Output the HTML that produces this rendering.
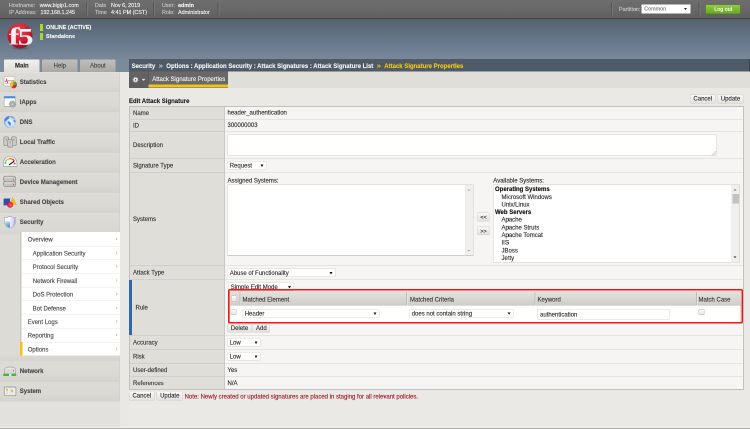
<!DOCTYPE html><html><head><meta charset="utf-8"><style>html,body{width:750px!important;height:429px!important;overflow:hidden}#w{position:absolute;left:0;top:0;width:1500px;height:858px;transform:scale(.5);transform-origin:0 0;will-change:transform;overflow:hidden}
*{box-sizing:border-box;margin:0;padding:0}
html,body{width:1500px;height:858px;overflow:hidden;-webkit-text-stroke:0.28px currentColor;background:#ebe9e5;font-family:"Liberation Sans",sans-serif;font-size:12px;color:#333}
.a{position:absolute;white-space:nowrap}
.hl{color:#c6c6c6;font-size:10.8px}
.hv{color:#f0f0f0;font-size:10.8px}
.sep{position:absolute;top:4px;width:2px;height:28px;background:#575757;box-shadow:2px 0 0 #767676}
.tab{position:absolute;top:119px;height:25px;text-align:center;line-height:25px;font-size:12px;color:#555;border-radius:2px 2px 0 0}
.nr{position:absolute;left:0;width:240px;background:#dcdbd6;border-top:1.2px solid #cfcec9}
.nr b{position:absolute;left:40px;font-weight:bold;color:#4a4a4a;font-size:12px;white-space:nowrap}
.nr svg{position:absolute;left:6px}
.si{position:absolute;left:0;width:196px;color:#4a4a4a;border-top:1.2px solid #e9e9e9;white-space:nowrap;font-size:12px}
.si i{position:absolute;right:5px;font-style:normal;color:#aaa;font-size:10px}
.row{position:absolute;left:258px;width:1229px;border-top:1.2px solid #e2e1dd;background:#f6f5f3}
.row .lb{position:absolute;left:0;top:0;bottom:0;width:190.6px;background:#dfded9;border-right:1.6px solid #c6c5c1;border-top:1.2px solid #cfcec9;margin-top:-1.2px}
.row .lb span{position:absolute;left:8px;top:50%;transform:translateY(-50%);color:#3a3a3a}
.btn{position:absolute;height:18px;line-height:15.8px;text-align:center;background:linear-gradient(#f9f9f8,#e3e2df);border:1.2px solid #cfcecb;border-radius:2px;color:#333;font-size:12px;white-space:nowrap}
.sel{position:absolute;height:17px;line-height:17px;background:#fff;border:1.2px solid #d8d7d3;border-radius:2px;padding-left:4.4px;color:#303030;font-size:12px;white-space:nowrap}
.sel i{position:absolute;right:4.8px;top:5.6px;width:0;height:0;border-left:3.4px solid transparent;border-right:3.4px solid transparent;border-top:5.2px solid #111}
.chk{position:absolute;width:12px;height:12px;border:1.2px solid #b9b9b9;border-radius:2px;background:linear-gradient(#fdfdfd,#e6e6e6)}
</style></head><body><div id="w">
<div class="a" style="left:0;top:0;width:1500px;height:37px;background:linear-gradient(#6e6e6e,#676767 60%,#5f5f5f)"></div>
<div class="a" style="left:0;top:36px;width:1500px;height:2px;background:#454545"></div>
<div class="a hl" style="left:18px;top:4.4px;">Hostname:</div>
<div class="a hv" style="left:79.4px;top:4.4px;">www.bigip1.com</div>
<div class="a hl" style="left:18px;top:18.4px;">IP Address:</div>
<div class="a hv" style="left:81px;top:18.4px;">192.168.1.245</div>
<div class="sep" style="left:172px"></div>
<div class="a hl" style="left:190px;top:4.4px;">Date</div>
<div class="a hv" style="left:222px;top:4.4px;">Nov 6, 2019</div>
<div class="a hl" style="left:190px;top:18.4px;">Time</div>
<div class="a hv" style="left:222px;top:18.4px;">4:41 PM (CST)</div>
<div class="sep" style="left:306px"></div>
<div class="a hl" style="left:324px;top:4.4px;">User:</div>
<div class="a hv" style="left:356px;top:4.4px;font-weight:bold">admin</div>
<div class="a hl" style="left:324px;top:18.4px;">Role:</div>
<div class="a hv" style="left:356px;top:18.4px;">Administrator</div>
<div class="sep" style="left:435px"></div>
<div class="sep" style="left:1222px"></div>
<div class="a hl" style="left:1238px;top:11.6px;">Partition:</div>
<div class="a" style="left:1283.4px;top:9.4px;width:97.2px;height:17.2px;background:#fff;color:#7a7a7a;font-size:10.8px;line-height:17.2px;padding-left:5px">Common<span class="a" style="left:84.6px;top:6.6px;width:0;height:0;border-left:3px solid transparent;border-right:3px solid transparent;border-top:4.6px solid #222"></span></div>
<div class="sep" style="left:1396.6px"></div>
<div class="a" style="left:1411.4px;top:8.6px;width:70px;height:19.4px;background:linear-gradient(#91cb45,#67a822);border:1.2px solid #55901a;border-radius:2.4px;color:#fff;text-align:center;line-height:17.6px;font-size:10.8px">Log out</div>
<div class="a" style="left:0;top:38px;width:1500px;height:106px;background:linear-gradient(#56626e,#67778a 40%,#7a8a9b 78%,#7b8b9b)"></div>
<svg class="a" style="left:0px;top:0px" width="80" height="110" viewBox="0 0 40 55">
<defs><radialGradient id="f5g" cx="0.45" cy="0.3" r="0.72"><stop offset="0" stop-color="#ee4b57"/><stop offset="0.6" stop-color="#cc1a32"/><stop offset="1" stop-color="#9a0f20"/></radialGradient>
<radialGradient id="f5s" cx="0.5" cy="0.5" r="0.5"><stop offset="0" stop-color="#2a323c" stop-opacity="0.6"/><stop offset="1" stop-color="#2a323c" stop-opacity="0"/></radialGradient>
<linearGradient id="f5t" x1="0" y1="0" x2="0" y2="1"><stop offset="0" stop-color="#ffffff"/><stop offset="1" stop-color="#e6e6e6"/></linearGradient></defs>
<ellipse cx="20.5" cy="48" rx="11" ry="2.2" fill="url(#f5s)"/>
<circle cx="20" cy="35.7" r="12.5" fill="url(#f5g)"/>
<g fill="url(#f5t)" font-family="Liberation Serif" font-weight="bold" font-size="24.5">
<text transform="translate(8.7,44.4) scale(1.32,1)">f</text>
<text transform="translate(17.6,44.9) scale(1.3,1)">5</text>
</g>
</svg>
<div class="a" style="left:80.4px;top:47.6px;width:6px;height:14.4px;background:#a6d63a"></div>
<div class="a" style="left:80.4px;top:65.6px;width:6px;height:14px;background:#a6d63a"></div>
<div class="a" style="left:92px;top:48px;color:#f2f2f2;font-weight:bold;font-size:10.8px">ONLINE (ACTIVE)</div>
<div class="a" style="left:92px;top:66px;color:#f2f2f2;font-weight:bold;font-size:10.8px">Standalone</div>
<div class="tab" style="left:8.4px;width:70.6px;background:linear-gradient(#f2f1ee,#e0dfdb);font-weight:bold;color:#333">Main</div>
<div class="tab" style="left:84.4px;width:70.6px;background:linear-gradient(#c0bfbb,#aaa9a5);color:#484848">Help</div>
<div class="tab" style="left:160.4px;width:70.6px;background:linear-gradient(#c0bfbb,#aaa9a5);color:#484848">About</div>
<div class="a" style="left:0;top:144px;width:240px;height:714px;background:#e2e1dd"></div>
<div class="a" style="left:240px;top:144px;width:18px;height:714px;background:#e9e8e4"></div>
<div class="a" style="left:0;top:145px;width:240px;height:40.2px;background:linear-gradient(#dddcd8,#dad9d4 60%,#d4d3ce);border-top:1.6px solid #e2e1dd"></div>
<svg class="a" style="left:0;top:144px" width="40" height="52" viewBox="0 72 20 26"><rect x="4" y="76.4" width="10.9" height="9.7" rx="0.8" fill="#f8f8f8" stroke="#a3a3a3" stroke-width="0.5"/>
<polyline points="4.8,81.6 6,81.6 6.6,78.6 7.4,82.6 8.1,80.8 14.2,80.8" fill="none" stroke="#e05050" stroke-width="0.7"/>
<line x1="4.8" y1="83.6" x2="11" y2="83.6" stroke="#9dbbe3" stroke-width="0.6"/>
<circle cx="13.5" cy="84.9" r="3.5" fill="#d92436"/>
<path d="M13.5 84.9 L13.5 81.4 A3.5 3.5 0 0 1 17 84.9 Z" fill="#3fae3a"/>
<path d="M13.5 84.9 L11.75 87.93 A3.5 3.5 0 0 1 13.5 81.4 Z" fill="#e9c22c"/></svg>
<div class="a" style="left:39.6px;top:157.2px;font-weight:bold;color:#4a4a4a;font-size:12px">Statistics</div>
<div class="a" style="left:0;top:185.2px;width:240px;height:40.2px;background:linear-gradient(#dddcd8,#dad9d4 60%,#d4d3ce);border-top:1.6px solid #e2e1dd"></div>
<svg class="a" style="left:0;top:184px" width="40" height="52" viewBox="0 92 20 26"><rect x="4.2" y="96.4" width="10.9" height="9.9" fill="#fcfcfc" stroke="#9c9c9c" stroke-width="0.5"/>
<rect x="4.2" y="96.4" width="10.9" height="1.9" fill="#3f8ce0"/>
<circle cx="12.5" cy="104.1" r="3" fill="#a8b1b3" stroke="#96a0a2" stroke-width="1.3" stroke-dasharray="0.9 0.7"/>
<circle cx="12.5" cy="104.1" r="0.9" fill="#d0d6d7"/></svg>
<div class="a" style="left:39.6px;top:197px;font-weight:bold;color:#4a4a4a;font-size:12px">iApps</div>
<div class="a" style="left:0;top:225.4px;width:240px;height:40.2px;background:linear-gradient(#dddcd8,#dad9d4 60%,#d4d3ce);border-top:1.6px solid #e2e1dd"></div>
<svg class="a" style="left:0;top:224px" width="40" height="52" viewBox="0 112 20 26"><defs><radialGradient id="gdns" cx="0.55" cy="0.55" r="0.6"><stop offset="0" stop-color="#f4f8fe"/><stop offset="0.6" stop-color="#c9dcf6"/><stop offset="1" stop-color="#5a8fe0"/></radialGradient></defs>
<circle cx="9.9" cy="121.9" r="6" fill="url(#gdns)"/>
<path d="M4.2 120 C4.8 118 6.5 116.5 8.5 116.1 C9.5 117 9.2 118.5 8 119.3 C6.8 120 6.5 121 5.5 121.5 Z" fill="#4f86da"/>
<path d="M7.8 121.5 C9 121.2 10.2 122 10.8 123 C11.2 124 10.5 125.2 10 126.2 C9.5 125.5 9.2 124.5 8.5 123.8 C7.8 123.2 7.5 122.3 7.8 121.5 Z" fill="#4a80d6"/>
<path d="M13.5 119.8 C14.5 120.2 15.5 120.8 15.8 121.8 C15.2 122.5 14.2 122.3 13.6 121.6 Z" fill="#4f86da"/>
<path d="M11 116.2 C12.5 116.5 13.8 117.3 14.6 118.3 C13.8 118.6 12.5 118.2 11.8 117.6 Z" fill="#6a9ae3"/></svg>
<div class="a" style="left:39.6px;top:237px;font-weight:bold;color:#4a4a4a;font-size:12px">DNS</div>
<div class="a" style="left:0;top:265.6px;width:240px;height:40.2px;background:linear-gradient(#dddcd8,#dad9d4 60%,#d4d3ce);border-top:1.6px solid #e2e1dd"></div>
<svg class="a" style="left:0;top:264px" width="40" height="52" viewBox="0 132 20 26"><g stroke="#8f8f8d" stroke-width="0.7" fill="#cdcdcb">
<rect x="3.8" y="136.8" width="4.9" height="8.9" rx="1.4"/>
<rect x="11.5" y="136.8" width="4.8" height="8.9" rx="1.4"/>
<rect x="7.7" y="139.5" width="5" height="7.6" rx="1.4"/></g>
<rect x="5.7" y="138.8" width="1" height="1.1" fill="#e06060"/><rect x="5.7" y="140.3" width="1" height="0.8" fill="#7ccf6e"/>
<rect x="13.4" y="138.8" width="1" height="1.1" fill="#e06060"/><rect x="13.4" y="140.3" width="1" height="0.8" fill="#7ccf6e"/>
<rect x="9.7" y="141.4" width="1" height="1.1" fill="#e06060"/><rect x="9.7" y="142.9" width="1" height="0.8" fill="#7ccf6e"/></svg>
<div class="a" style="left:39.6px;top:277px;font-weight:bold;color:#4a4a4a;font-size:12px">Local Traffic</div>
<div class="a" style="left:0;top:305.8px;width:240px;height:40.2px;background:linear-gradient(#dddcd8,#dad9d4 60%,#d4d3ce);border-top:1.6px solid #e2e1dd"></div>
<svg class="a" style="left:0;top:304px" width="40" height="52" viewBox="0 152 20 26"><path d="M3.4 166.3 L3.4 163 A6.75 6.75 0 0 1 16.9 163 L16.9 166.3 Z" fill="#f7f7f7" stroke="#9a9a9a" stroke-width="0.6"/>
<g fill="none" stroke-width="1.5">
<path d="M5.35 164 A4.8 4.8 0 0 1 5.8 161.2" stroke="#3ec8d0"/>
<path d="M5.8 161.2 A4.8 4.8 0 0 1 9.3 158.7" stroke="#e8c62a"/>
<path d="M9.3 158.7 A4.8 4.8 0 0 1 12.8 159.5" stroke="#f0801e"/>
<path d="M12.8 159.5 A4.8 4.8 0 0 1 14.3 161" stroke="#e83030"/></g>
<circle cx="14.6" cy="163.6" r="0.9" fill="#ee2a2a"/>
<line x1="9.4" y1="164.6" x2="13.8" y2="161.6" stroke="#111" stroke-width="1.1" stroke-linecap="round"/></svg>
<div class="a" style="left:39.6px;top:317px;font-weight:bold;color:#4a4a4a;font-size:12px">Acceleration</div>
<div class="a" style="left:0;top:346px;width:240px;height:40.2px;background:linear-gradient(#dddcd8,#dad9d4 60%,#d4d3ce);border-top:1.6px solid #e2e1dd"></div>
<svg class="a" style="left:0;top:346px" width="40" height="52" viewBox="0 173 20 26"><g stroke="#8c8c8a" stroke-width="0.7" fill="#c4c4c2">
<rect x="3.6" y="181.3" width="12.1" height="5.4" rx="2"/>
<rect x="3.6" y="176.2" width="12.1" height="5.5" rx="2"/></g>
<line x1="5" y1="177.8" x2="12.5" y2="177.8" stroke="#f2f2f2" stroke-width="0.6"/>
<line x1="5" y1="182.9" x2="12.5" y2="182.9" stroke="#f2f2f2" stroke-width="0.6"/>
<circle cx="13.5" cy="179.9" r="0.6" fill="#e8485a"/><circle cx="13.5" cy="184.6" r="0.6" fill="#e8485a"/></svg>
<div class="a" style="left:39.6px;top:357px;font-weight:bold;color:#4a4a4a;font-size:12px">Device Management</div>
<div class="a" style="left:0;top:386.2px;width:240px;height:40.2px;background:linear-gradient(#dddcd8,#dad9d4 60%,#d4d3ce);border-top:1.6px solid #e2e1dd"></div>
<svg class="a" style="left:0;top:386px" width="40" height="52" viewBox="0 193 20 26"><path d="M12.6 196.8 L16.9 204.9 L9.5 204.9 Z" fill="#f0b92a"/>
<rect x="3.6" y="198.9" width="6.4" height="6.4" fill="#2c52a0"/>
<path d="M3.6 198.9 L4.6 198.2 L10.8 198.2 L10 198.9 Z" fill="#5577c0"/>
<defs><radialGradient id="gso" cx="0.6" cy="0.55" r="0.6"><stop offset="0" stop-color="#f0607a"/><stop offset="1" stop-color="#e0102e"/></radialGradient></defs>
<circle cx="10.1" cy="204.7" r="3.1" fill="url(#gso)"/></svg>
<div class="a" style="left:39.6px;top:397px;font-weight:bold;color:#4a4a4a;font-size:12px">Shared Objects</div>
<div class="a" style="left:0;top:426.4px;width:240px;height:296.6px;background:linear-gradient(#dddcd8,#d9d8d3 34px,#d5d4cf 39px,#dcdbd6 42px,#dcdbd6 280px,#d4d3ce);border-top:1.6px solid #e2e1dd"></div>
<svg class="a" style="left:0;top:426px" width="40" height="52" viewBox="0 213 20 26"><defs><linearGradient id="shb" x1="0" y1="0" x2="0.3" y2="1"><stop offset="0" stop-color="#d8ecfa"/><stop offset="1" stop-color="#3b97d8"/></linearGradient><linearGradient id="shr" x1="0" y1="0" x2="1" y2="0.3"><stop offset="0" stop-color="#f4f2ff"/><stop offset="0.7" stop-color="#dcd6fb"/><stop offset="1" stop-color="#a89ae8"/></linearGradient></defs>
<path d="M9.95 216 C11.5 217.2 13.5 217.6 15.5 217.5 L15.5 222 C15.5 225 13 227.2 9.95 228.3 C6.9 227.2 4.4 225 4.4 222 L4.4 217.5 C6.4 217.6 8.4 217.2 9.95 216 Z" fill="#fbfbff" stroke="#9a9aa8" stroke-width="0.55"/>
<path d="M9.95 216.6 C11.5 217.7 13.3 218 15 218 L15 222 C15 224.8 12.8 226.8 9.95 227.8 Z" fill="url(#shr)"/>
<path d="M4.9 221 L9.95 221.8 L9.95 227.8 C7.1 226.8 4.9 224.8 4.9 222 Z" fill="url(#shb)"/></svg>
<div class="a" style="left:39.6px;top:437px;font-weight:bold;color:#4a4a4a;font-size:12px">Security</div>
<div class="a" style="left:0;top:723px;width:240px;height:39.8px;background:linear-gradient(#dddcd8,#dad9d4 60%,#d4d3ce);border-top:1.6px solid #e2e1dd"></div>
<svg class="a" style="left:0;top:722px" width="40" height="52" viewBox="0 361 20 26"><path d="M4.6 373.9 L4.6 370 C4.6 367.8 6.5 367 10.15 367 C13.8 367 15.7 367.8 15.7 370 L15.7 373.9 Z" fill="#d9d9d9" stroke="#9a9a9a" stroke-width="0.5"/>
<line x1="6.5" y1="368.6" x2="12.5" y2="368.6" stroke="#f4f4f4" stroke-width="0.6"/>
<rect x="13.2" y="370.2" width="0.8" height="1.3" fill="#e05060"/>
<rect x="3" y="373.6" width="13.5" height="2.4" rx="1.2" fill="#3fba3a"/>
<rect x="9" y="373.8" width="2.4" height="2" fill="#f3f3f3"/></svg>
<div class="a" style="left:39.6px;top:735px;font-weight:bold;color:#4a4a4a;font-size:12px">Network</div>
<div class="a" style="left:0;top:762.8px;width:240px;height:40px;background:linear-gradient(#dddcd8,#dad9d4 60%,#d4d3ce);border-top:1.6px solid #e2e1dd"></div>
<svg class="a" style="left:0;top:762px" width="40" height="52" viewBox="0 381 20 26"><rect x="4.2" y="387" width="11.7" height="8.7" rx="1.2" fill="#f0f0ee" stroke="#8e8e8e" stroke-width="0.7"/>
<line x1="10" y1="387.6" x2="10" y2="395.2" stroke="#d2d2d0" stroke-width="0.5"/>
<line x1="7" y1="388.2" x2="7" y2="394.5" stroke="#b8b8c8" stroke-width="0.5"/>
<line x1="12.1" y1="388.5" x2="12.1" y2="394.5" stroke="#b8b8c8" stroke-width="0.5"/>
<circle cx="7" cy="389.7" r="1" fill="#d5bf1e"/><circle cx="12.1" cy="391" r="1.1" fill="#d5bf1e"/></svg>
<div class="a" style="left:39.6px;top:775px;font-weight:bold;color:#4a4a4a;font-size:12px">System</div>
<div class="a" style="left:238px;top:144px;width:2px;height:658.8px;background:#d3d2cd"></div>
<div class="a" style="left:40.4px;top:464.4px;width:199.6px;height:246.6px;background:#fff;border-left:3.2px solid #c9c8c4"></div>
<div class="si" style="left:44px;top:464.4px;height:27.4px;border-top:none;"><span style="position:absolute;left:11.4px;top:7.2px">Overview</span><i style="top:7.2px">&#8250;</i></div>
<div class="si" style="left:44px;top:491.8px;height:27.4px;"><span style="position:absolute;left:21.6px;top:7.2px">Application Security</span><i style="top:7.2px">&#8250;</i></div>
<div class="si" style="left:44px;top:519.2px;height:27.4px;"><span style="position:absolute;left:21.6px;top:7.2px">Protocol Security</span><i style="top:7.2px">&#8250;</i></div>
<div class="si" style="left:44px;top:546.6px;height:27.4px;"><span style="position:absolute;left:21.6px;top:7.2px">Network Firewall</span><i style="top:7.2px">&#8250;</i></div>
<div class="si" style="left:44px;top:574px;height:27.4px;"><span style="position:absolute;left:21.6px;top:7.2px">DoS Protection</span><i style="top:7.2px">&#8250;</i></div>
<div class="si" style="left:44px;top:601.4px;height:27.4px;"><span style="position:absolute;left:21.6px;top:7.2px">Bot Defense</span><i style="top:7.2px">&#8250;</i></div>
<div class="si" style="left:44px;top:628.8px;height:27.4px;"><span style="position:absolute;left:11.4px;top:7.2px">Event Logs</span><i style="top:7.2px">&#8250;</i></div>
<div class="si" style="left:44px;top:656.2px;height:27.4px;"><span style="position:absolute;left:11.4px;top:7.2px">Reporting</span><i style="top:7.2px">&#8250;</i></div>
<div class="si" style="left:44px;top:683.6px;height:27.4px;"><span style="position:absolute;left:11.4px;top:7.2px">Options</span><i style="top:7.2px">&#8250;</i></div>
<div class="a" style="left:40.4px;top:683.8px;width:5px;height:27px;background:#f5c211"></div>
<div class="a" style="left:258px;top:118.4px;width:1242px;height:24.6px;background:#4e5a66;border-right:2px solid #38414a"></div>
<div class="a" style="left:263.2px;top:124.8px;color:#eef0f2;font-weight:bold;font-size:12px">Security<span style="display:inline-block;width:22px;text-align:center;font-weight:normal;font-size:15px;line-height:12px;color:#c8cdd2">&raquo;</span>Options : Application Security : Attack Signatures : Attack Signature List<span style="display:inline-block;width:22px;text-align:center;font-weight:normal;font-size:15px;line-height:12px;color:#e9c317">&raquo;</span><span style="color:#f2c518">Attack Signature Properties</span></div>
<div class="a" style="left:258px;top:143px;width:1242px;height:32.6px;background:#dfded9"></div>
<div class="a" style="left:258px;top:143px;width:39px;height:32.6px;background:linear-gradient(#646464,#5c5c5c);border-right:1.6px solid #4a4a4a"></div>
<svg class="a" style="left:264px;top:151px" width="28" height="16" viewBox="0 0 14 8"><circle cx="3.5" cy="4.3" r="2.05" fill="#ececec"/><circle cx="3.5" cy="4.3" r="2.45" fill="none" stroke="#ececec" stroke-width="0.9" stroke-dasharray="0.85 1.07"/><ellipse cx="3.5" cy="4.3" rx="0.6" ry="0.85" fill="#4a4a4a"/><path d="M9.8 3.4 L13.4 3.4 L11.6 5.4 Z" fill="#ececec"/></svg>
<div class="a" style="left:297px;top:143px;width:159px;height:32.6px;background:#686868"></div>
<div class="a" style="left:304.4px;top:151px;color:#f0f0f0;font-size:12px">Attack Signature Properties</div>
<div class="a" style="left:297px;top:169.2px;width:159px;height:6px;background:#f2c30f"></div>
<div class="a" style="left:258px;top:195.2px;color:#222;font-weight:bold;font-size:12px">Edit Attack Signature</div>
<div class="btn" style="left:1380px;top:189px;width:51px;height:17.6px">Cancel</div>
<div class="btn" style="left:1435px;top:189px;width:52px;height:17.6px">Update</div>
<div class="a" style="left:258px;top:212px;width:1230px;height:568px;border:2px solid #c2c1bd;background:#f6f5f3"></div>
<div class="a" style="left:260px;top:214px;width:188px;height:564px;background:#dfded9"></div>
<div class="a" style="left:448px;top:214px;width:2px;height:564px;background:#c9c8c4"></div>
<div class="a" style="left:266px;top:218.8px;color:#383838">Name</div>
<div class="a" style="left:260px;top:238px;width:188px;height:2px;background:#d1d0cc"></div>
<div class="a" style="left:450px;top:238px;width:1036px;height:2px;background:#e5e4e0"></div>
<div class="a" style="left:266px;top:243.8px;color:#383838">ID</div>
<div class="a" style="left:260px;top:262px;width:188px;height:2px;background:#d1d0cc"></div>
<div class="a" style="left:450px;top:262px;width:1036px;height:2px;background:#e5e4e0"></div>
<div class="a" style="left:266px;top:282.8px;color:#383838">Description</div>
<div class="a" style="left:260px;top:316px;width:188px;height:2px;background:#d1d0cc"></div>
<div class="a" style="left:450px;top:316px;width:1036px;height:2px;background:#e5e4e0"></div>
<div class="a" style="left:266px;top:323.8px;color:#383838">Signature Type</div>
<div class="a" style="left:260px;top:344px;width:188px;height:2px;background:#d1d0cc"></div>
<div class="a" style="left:450px;top:344px;width:1036px;height:2px;background:#e5e4e0"></div>
<div class="a" style="left:266px;top:430.8px;color:#383838">Systems</div>
<div class="a" style="left:260px;top:530px;width:188px;height:2px;background:#d1d0cc"></div>
<div class="a" style="left:450px;top:530px;width:1036px;height:2px;background:#e5e4e0"></div>
<div class="a" style="left:266px;top:537.8px;color:#383838">Attack Type</div>
<div class="a" style="left:260px;top:558px;width:188px;height:2px;background:#d1d0cc"></div>
<div class="a" style="left:450px;top:558px;width:1036px;height:2px;background:#e5e4e0"></div>
<div class="a" style="left:271px;top:607.8px;color:#383838">Rule</div>
<div class="a" style="left:260px;top:670px;width:188px;height:2px;background:#d1d0cc"></div>
<div class="a" style="left:450px;top:670px;width:1036px;height:2px;background:#e5e4e0"></div>
<div class="a" style="left:266px;top:677.8px;color:#383838">Accuracy</div>
<div class="a" style="left:260px;top:698px;width:188px;height:2px;background:#d1d0cc"></div>
<div class="a" style="left:450px;top:698px;width:1036px;height:2px;background:#e5e4e0"></div>
<div class="a" style="left:266px;top:705.8px;color:#383838">Risk</div>
<div class="a" style="left:260px;top:726px;width:188px;height:2px;background:#d1d0cc"></div>
<div class="a" style="left:450px;top:726px;width:1036px;height:2px;background:#e5e4e0"></div>
<div class="a" style="left:266px;top:732.8px;color:#383838">User-defined</div>
<div class="a" style="left:260px;top:752px;width:188px;height:2px;background:#d1d0cc"></div>
<div class="a" style="left:450px;top:752px;width:1036px;height:2px;background:#e5e4e0"></div>
<div class="a" style="left:266px;top:758.8px;color:#383838">References</div>
<div class="a" style="left:258px;top:560px;width:6px;height:110px;background:#2f6aa6"></div>
<div class="a" style="left:455px;top:218.4px;color:#303030;">header_authentication</div>
<div class="a" style="left:455px;top:243px;color:#303030;">300000003</div>
<div class="a" style="left:454.6px;top:268.6px;width:978.6px;height:42.6px;background:#fff;border:1.4px solid #d4d3cf;border-radius:2px"></div>
<svg class="a" style="left:1422px;top:301px" width="12" height="12" viewBox="0 0 6 6"><path d="M0.6 5 L5 0.6 M2.8 5 L5 2.8" stroke="#c4c4c4" stroke-width="0.7"/></svg>
<div class="sel" style="left:454px;top:322px;width:78.6px">Request<i></i></div>
<div class="a" style="left:455px;top:354px;color:#303030;">Assigned Systems:</div>
<div class="a" style="left:454.6px;top:368.8px;width:492.6px;height:142px;background:#fff;border:1.4px solid #cfceca"></div>
<div class="a" style="left:930px;top:370px;width:16px;height:140px;background:#efefef;border-left:1px solid #e2e2e2"></div>
<div class="a" style="left:934.6px;top:377.8px;width:0;height:0;border-left:3.4px solid transparent;border-right:3.4px solid transparent;border-bottom:3.6px solid #a0a0a0"></div>
<div class="a" style="left:934.6px;top:499.8px;width:0;height:0;border-left:3.4px solid transparent;border-right:3.4px solid transparent;border-top:3.6px solid #a0a0a0"></div>
<div class="btn" style="left:954.4px;top:425px;width:25px;height:17.6px;font-size:11px;line-height:16.8px">&lt;&lt;</div>
<div class="btn" style="left:954.4px;top:452.6px;width:25px;height:17.6px;font-size:11px;line-height:16.8px">&gt;&gt;</div>
<div class="a" style="left:986.6px;top:354px;color:#303030;">Available Systems:</div>
<div class="a" style="left:986px;top:368.8px;width:493.6px;height:156px;background:#fff;border:1.4px solid #cfceca"></div>
<div class="a" style="left:1462.6px;top:370px;width:16px;height:154px;background:#efefef;border-left:1px solid #e2e2e2"></div>
<div class="a" style="left:1465px;top:388px;width:12.6px;height:19.2px;background:#c2c2c2"></div>
<div class="a" style="left:1466.6px;top:377.8px;width:0;height:0;border-left:3.4px solid transparent;border-right:3.4px solid transparent;border-bottom:3.6px solid #6a6a6a"></div>
<div class="a" style="left:1466.6px;top:513px;width:0;height:0;border-left:3.4px solid transparent;border-right:3.4px solid transparent;border-top:3.6px solid #1a1a1a"></div>
<div class="a" style="left:990px;top:371.2px;color:#303030;font-weight:bold;color:#111">Operating Systems</div>
<div class="a" style="left:1003px;top:386.52px;color:#303030;">Microsoft Windows</div>
<div class="a" style="left:1003px;top:401.84px;color:#303030;">Unix/Linux</div>
<div class="a" style="left:990px;top:417.16px;color:#303030;font-weight:bold;color:#111">Web Servers</div>
<div class="a" style="left:1003px;top:432.48px;color:#303030;">Apache</div>
<div class="a" style="left:1003px;top:447.8px;color:#303030;">Apache Struts</div>
<div class="a" style="left:1003px;top:463.12px;color:#303030;">Apache Tomcat</div>
<div class="a" style="left:1003px;top:478.44px;color:#303030;">IIS</div>
<div class="a" style="left:1003px;top:493.76px;color:#303030;">JBoss</div>
<div class="a" style="left:1003px;top:509.08px;color:#303030;">Jetty</div>
<div class="sel" style="left:454px;top:537px;width:217px">Abuse of Functionality<i></i></div>
<div class="sel" style="left:456px;top:565px;width:132px">Simple Edit Mode<i></i></div>
<div class="a" style="left:459px;top:583px;width:1023px;height:62px;background:#fff;border:1.2px solid #c9c8c4"></div>
<div class="a" style="left:459.6px;top:584.4px;width:1022px;height:26.8px;background:linear-gradient(#e3e2de,#cfcec9);border-bottom:1.2px solid #b9b8b4"></div>
<div class="a" style="left:479px;top:584.4px;width:1.6px;height:26.8px;background:#bdbcb8;box-shadow:1.2px 0 0 #ecebe7"></div>
<div class="a" style="left:812px;top:584.4px;width:1.6px;height:26.8px;background:#bdbcb8;box-shadow:1.2px 0 0 #ecebe7"></div>
<div class="a" style="left:1069px;top:584.4px;width:1.6px;height:26.8px;background:#bdbcb8;box-shadow:1.2px 0 0 #ecebe7"></div>
<div class="a" style="left:1392px;top:584.4px;width:1.6px;height:26.8px;background:#bdbcb8;box-shadow:1.2px 0 0 #ecebe7"></div>
<div class="chk" style="left:462px;top:590.6px"></div>
<div class="a" style="left:485px;top:591.6px;color:#303030;color:#3a3a3a">Matched Element</div>
<div class="a" style="left:820px;top:591.6px;color:#303030;color:#3a3a3a">Matched Criteria</div>
<div class="a" style="left:1075px;top:591.6px;color:#303030;color:#3a3a3a">Keyword</div>
<div class="a" style="left:1397px;top:591.6px;color:#303030;color:#3a3a3a">Match Case</div>
<div class="chk" style="left:461.2px;top:618.4px"></div>
<div class="sel" style="left:484px;top:618px;width:275px">Header<i></i></div>
<div class="sel" style="left:818px;top:618px;width:209px">does not contain string<i></i></div>
<div class="a" style="left:1074px;top:618px;width:265.2px;height:21px;background:#fff;border:1.2px solid #d8d7d3;padding-left:5px;line-height:21px;color:#333">authentication</div>
<div class="chk" style="left:1397px;top:618px"></div>
<div class="a" style="left:456px;top:578px;width:1030.4px;height:68.8px;border:3px solid #fa1414;border-radius:3.6px"></div>
<div class="btn" style="left:454px;top:648px;width:50px;height:17px">Delete</div>
<div class="btn" style="left:505.2px;top:648px;width:35.2px;height:17px">Add</div>
<div class="sel" style="left:454px;top:676px;width:67px">Low<i></i></div>
<div class="sel" style="left:454px;top:704px;width:67px">Low<i></i></div>
<div class="a" style="left:455px;top:733px;color:#303030;">Yes</div>
<div class="a" style="left:455px;top:759.4px;color:#303030;">N/A</div>
<div class="btn" style="left:258px;top:783.2px;width:51.2px;height:18px">Cancel</div>
<div class="btn" style="left:313px;top:783.2px;width:53px;height:18px">Update</div>
<div class="a" style="left:369.2px;top:785.6px;color:#a0202a;font-size:12px">Note: Newly created or updated signatures are placed in staging for all relevant policies.</div>
<div class="a" style="left:0;top:854px;width:1500px;height:2px;background:#f3f2ee"></div>
<div class="a" style="left:0;top:856px;width:1500px;height:2px;background:#a9a9a7"></div>
</div></body></html>
